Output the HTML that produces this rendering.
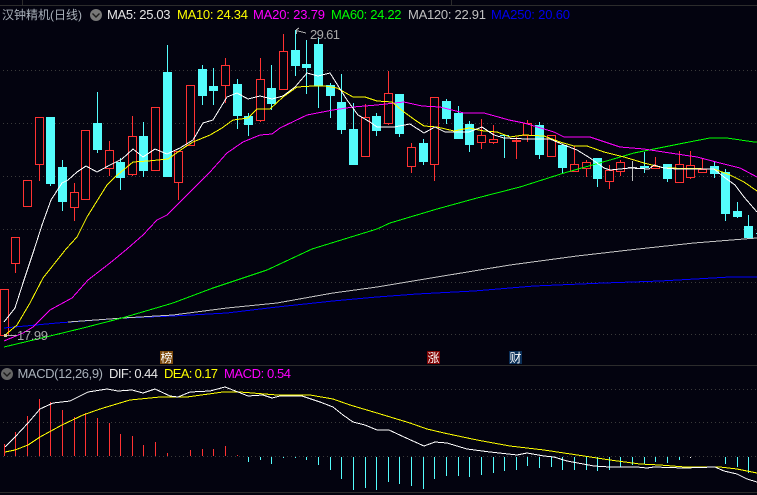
<!DOCTYPE html>
<html lang="zh">
<head>
<meta charset="utf-8">
<title>汉钟精机(日线)</title>
<style>
html,body{margin:0;padding:0;background:#03030f;width:757px;height:495px;overflow:hidden}
svg{display:block}
text{font-family:"Liberation Sans","Noto Sans CJK SC",sans-serif;font-size:13px}
.l{fill:none;stroke-width:1;shape-rendering:crispEdges}
</style>
</head>
<body>
<svg width="757" height="495" viewBox="0 0 757 495" xmlns="http://www.w3.org/2000/svg">
<rect width="757" height="495" fill="#03030f"/>
<!-- separators -->
<path class="l" stroke="#2c2c2c" d="M0 5.5H757M0 365.5H757M0 492.5H757M22.5 0V5M451.5 0V5"/>
<!-- grid -->
<path class="l" stroke="#3a3a3a" stroke-dasharray="1 3" d="M3 70.5H757M3 123.5H757M3 176.5H757M3 229.5H757M3 282.5H757M3 334.5H757M3 389.5H757M3 422.5H757M3 456.5H757"/>

<!-- red wicks -->
<path class="l" stroke="#ff3232" d="M15.5 263V273M39.5 164V181M74.5 183V221M109.5 141V176M132.5 116V176M178.5 151V200M225.5 58V103M260.5 58V122M283.5 34V51M365.5 104V156M388.5 71V125M411.5 143V173M434.5 97V181M481.5 119V149M493.5 125V144M516.5 137V159M527.5 120V142M551.5 135V157M574.5 146V172M586.5 160V177M609.5 165V189M620.5 160V176M655.5 157V169M679.5 151V182M690.5 151V179M702.5 158V173"/>
<!-- red bodies -->
<path class="l" stroke="#ff3232" fill="#03030f" style="fill:#03030f" d="M.5 289.5h8V335.5h-8zM11.5 237.5h8V263.5h-8zM23.5 180.5h8V206.5h-8zM35.5 117.5h8V164.5h-8zM70.5 192.5h8V207.5h-8zM81.5 130.5h8V199.5h-8zM105.5 150.5h8V168.5h-8zM128.5 136.5h8V174.5h-8zM151.5 107.5h8V170.5h-8zM174.5 151.5h8V182.5h-8zM186.5 85.5h8V145.5h-8zM221.5 65.5h8V85.5h-8zM256.5 79.5h8V120.5h-8zM279.5 51.5h8V89.5h-8zM361.5 117.5h8V156.5h-8zM384.5 93.5h8V123.5h-8zM407.5 147.5h8V166.5h-8zM430.5 97.5h8V164.5h-8zM477.5 135.5h8V142.5h-8zM489.5 139.5h8V142.5h-8zM523.5 123.5h8V135.5h-8zM547.5 135.5h8V156.5h-8zM570.5 164.5h8V171.5h-8zM582.5 162.5h8V168.5h-8zM605.5 170.5h8V181.5h-8zM616.5 162.5h8V171.5h-8zM651.5 166.5h8V168.5h-8zM675.5 164.5h8V182.5h-8zM686.5 165.5h8V177.5h-8zM698.5 169.5h8V172.5h-8z"/>
<rect x="512" y="140" width="9" height="2" fill="#ff3232"/>

<!-- grey doji -->
<path class="l" stroke="#c0c0c0" d="M632.5 161V181M628 167.5H637"/>

<!-- cyan wicks -->
<path class="l" stroke="#54fcfc" d="M50.5 117V186M62.5 160V211M97.5 92V153M120.5 158V190M143.5 122V177M167.5 45V177M202.5 65V105M213.5 68V105M237.5 79V129M248.5 113V136M271.5 65V110M295.5 30V76M306.5 40V94M318.5 37V108M330.5 83V118M341.5 74V134M353.5 103V165M376.5 113V136M399.5 94V137M423.5 139V165M446.5 99V124M458.5 106V139M469.5 121V152M504.5 135V158M539.5 122V159M562.5 145V173M597.5 158V187M644.5 152V173M667.5 164V182M714.5 162V178M725.5 169V221M737.5 202V218M748.5 215V238"/>
<!-- cyan bodies -->
<path fill="#54fcfc" d="M46 117h9v67h-9zM58 167h9v35h-9zM93 123h9v27h-9zM116 162h9v16h-9zM139 136h9v35h-9zM163 72h9v105h-9zM198 69h9v27h-9zM209 86h9v5h-9zM233 84h9v32h-9zM244 116h9v9h-9zM267 88h9v16h-9zM291 50h9v16h-9zM302 64h9v4h-9zM314 44h9v42h-9zM326 85h9v11h-9zM337 102h9v28h-9zM349 129h9v36h-9zM372 116h9v15h-9zM395 94h9v40h-9zM419 143h9v19h-9zM442 101h9v18h-9zM454 113h9v26h-9zM465 124h9v21h-9zM500 135h9v1h-9zM535 125h9v30h-9zM558 145h9v23h-9zM593 158h9v21h-9zM640 166h9v2h-9zM663 164h9v15h-9zM710 166h9v8h-9zM721 172h9v42h-9zM733 211h9v6h-9zM744 226h9v12h-9zM756 233h1v1h-1z"/>

<!-- MA250 -->
<polyline class="l" stroke="#0000ff" stroke-width="1" points="4,328 57,323 123,318 173,316 227,313 277,307 333,301 377,297 417,294 474,291 534,286 604,283 660,281 730,277 757,277"/>
<!-- MA120 -->
<polyline class="l" stroke="#c4c4c4" points="68,322 123,318 173,315 227,308 277,303 333,293 377,287 437,277 510,265 577,256 638,249 694,243 744,239 757,238"/>
<!-- MA60 -->
<polyline class="l" stroke="#00ff00" points="4,347 50,336 83,328 122,318 173,303 213,288 267,270 312,249 377,229 390,223 437,209 477,198 520,187 564,173 610,160 634,153 654,149 684,143 710,138 727,138 754,142 757,142"/>
<!-- MA20 -->
<polyline class="l" stroke="#ff00ff" points="4,341 23,333 33,327 50,310 72,298 88,280 110,263 127,249 143,235 157,220 167,215 197,185 210,172 227,153 243,142 260,135 272,134 280,128 307,115 333,110 353,107 377,105 404,102 422,106 440,107 464,113 484,113 509,120 524,123 554,132 564,137 590,137 620,147 644,149 670,153 697,157 720,163 740,168 757,177"/>
<!-- MA10 -->
<polyline class="l" stroke="#ffff00" points="4,336 17,325 30,303 43,278 66,249 77,237 87,217 107,185 115,177 133,162 148,161 168,159 185,147 193,142 210,135 222,128 233,120 248,118 257,109 270,109 283,97 297,87 313,86 325,86 337,88 353,97 365,97 377,101 392,102 404,112 415,120 424,126 437,127 454,131 469,128 484,131 497,132 510,137 524,135 544,136 560,142 574,146 587,146 604,152 624,157 644,163 664,168 714,169 730,175 744,182 757,191"/>
<!-- MA5 -->
<polyline class="l" stroke="#ffffff" points="4,322 15,308 23,283 34,250 42,225 51,200 62,183 68,180 77,172 86,166 97,172 110,165 122,159 133,149 143,157 155,149 167,154 180,148 193,140 203,123 213,120 227,97 237,93 248,99 260,96 272,99 283,96 295,87 307,73 318,76 330,73 347,100 358,115 370,122 377,127 394,127 410,124 424,133 435,127 445,132 469,132 482,127 494,135 504,138 527,139 550,139 564,145 577,150 590,158 604,168 610,170 630,168 649,169 654,165 664,168 677,169 714,169 724,177 735,185 744,197 757,212"/>

<!-- high / low markers -->
<path class="l" stroke="#b0b0b0" d="M296.5 29V34M296 30.5L306 33M296 30L299 28M6 335.5H17"/>
<rect x="4" y="334" width="3" height="3" fill="#d8d8a0"/>
<text x="310" y="39" fill="#a8a8a8" textLength="30" lengthAdjust="spacing">29.61</text>
<text x="17" y="340" fill="#a8a8a8" textLength="31" lengthAdjust="spacing">17.99</text>

<!-- header -->
<text x="2" y="19" fill="#a9b1ba" style="font-size:12px;font-family:'Liberation Sans','Noto Sans CJK SC',sans-serif">汉钟精机(日线)</text>
<circle cx="96" cy="15" r="6" fill="#777"/>
<path d="M92.5 13.5L96 17L99.5 13.5" fill="none" stroke="#1c1c1c" stroke-width="1.4"/>
<text x="107" y="19" fill="#e6e6e6" textLength="63.5" lengthAdjust="spacing">MA5: 25.03</text>
<text x="177" y="19" fill="#ffff00" textLength="71" lengthAdjust="spacing">MA10: 24.34</text>
<text x="253" y="19" fill="#ff00ff" textLength="72" lengthAdjust="spacing">MA20: 23.79</text>
<text x="331" y="19" fill="#00ff00" textLength="70.5" lengthAdjust="spacing">MA60: 24.22</text>
<text x="408" y="19" fill="#c0c0c0" textLength="78" lengthAdjust="spacing">MA120: 22.91</text>
<text x="491" y="19" fill="#0000f0" textLength="79" lengthAdjust="spacing">MA250: 20.60</text>

<!-- event tags -->
<rect x="160" y="351" width="13" height="13" fill="#7c4a0c"/>
<text x="160.5" y="362" fill="#fff" style="font-size:12px">榜</text>
<rect x="427" y="351" width="13" height="13" fill="#800404"/>
<text x="427.5" y="362" fill="#fff" style="font-size:12px">涨</text>
<rect x="509" y="351" width="13" height="13" fill="#0a2f58"/>
<text x="509.5" y="362" fill="#fff" style="font-size:12px">财</text>

<!-- MACD header -->
<circle cx="7" cy="374" r="6" fill="#666"/>
<path d="M3.5 372.5L7 376L10.5 372.5" fill="none" stroke="#1c1c1c" stroke-width="1.4"/>
<text x="17.5" y="378" fill="#a9b1ba" textLength="85.5" lengthAdjust="spacing">MACD(12,26,9)</text>
<text x="109" y="378" fill="#e6e6e6" textLength="49" lengthAdjust="spacing">DIF: 0.44</text>
<text x="164" y="378" fill="#ffff00" textLength="54" lengthAdjust="spacing">DEA: 0.17</text>
<text x="224" y="378" fill="#ff00ff" textLength="67" lengthAdjust="spacing">MACD: 0.54</text>

<!-- MACD bars -->
<path class="l" stroke="#ff3232" d="M4.5 444V456M15.5 432V456M27.5 416V456M39.5 399V456M50.5 402V456M62.5 410V456M74.5 417V456M85.5 413V456M97.5 418V456M109.5 423V456M120.5 434V456M132.5 436V456M143.5 445V456M155.5 442V456M167.5 453V456M190.5 450V456M202.5 449V456M213.5 449V456M225.5 446V456M237.5 455V456"/>
<path class="l" stroke="#54fcfc" d="M248.5 457V462M260.5 457V460M271.5 457V464M283.5 457V458M295.5 457V458M306.5 457V460M318.5 457V465M330.5 457V470M341.5 457V479M353.5 457V490M365.5 457V488M376.5 457V490M388.5 457V482M399.5 457V484M411.5 457V486M423.5 457V489M434.5 457V479M446.5 457V476M458.5 457V476M469.5 457V477M481.5 457V475M493.5 457V473M504.5 457V471M516.5 457V470M527.5 457V466M539.5 457V468M551.5 457V467M562.5 457V470M574.5 457V470M586.5 457V470M597.5 457V471M609.5 457V470M620.5 457V467M632.5 457V465M644.5 457V464M655.5 457V462M667.5 457V463M679.5 457V460M725.5 457V464M737.5 457V467M748.5 457V473"/>
<rect x="690" y="457" width="1" height="1" fill="#fff"/>

<!-- DEA -->
<polyline class="l" stroke="#ffff00" points="5,452 15,450 28,445 40,437 62,425 83,415 100,409 130,400 160,397 187,397 223,392 240,392 277,395 310,395 333,399 350,405 377,413 410,423 427,429 444,433 477,440 510,446 544,450 584,456 610,460 640,464 660,465 685,467 720,467 737,469 757,473"/>
<!-- DIF -->
<polyline class="l" stroke="#ffffff" points="5,447 15,437 28,423 40,409 53,403 70,401 88,392 107,389 118,391 132,390 143,393 155,389 170,396 178,397 190,392 210,391 225,387 238,392 248,396 263,395 272,398 280,396 302,396 320,402 333,407 343,415 353,422 365,425 377,430 389,430 404,437 424,446 435,442 447,443 467,449 490,452 517,455 527,453 544,456 554,457 567,461 594,466 610,467 637,467 647,468 654,467 684,468 715,467 724,471 737,474 747,479 757,482"/>
</svg>
</body>
</html>
